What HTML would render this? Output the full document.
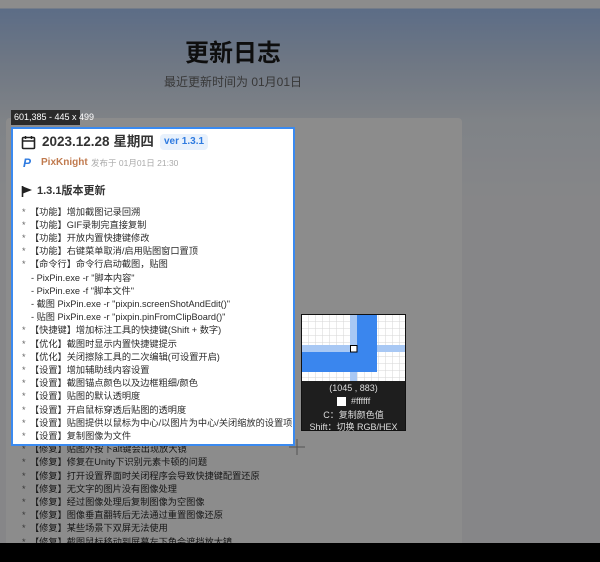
<!DOCTYPE html>
<html><head><meta charset="utf-8"><style>
*{margin:0;padding:0;box-sizing:border-box}
body{width:600px;height:562px;overflow:hidden;position:relative;font-family:"Liberation Sans","Noto Sans CJK SC",sans-serif;background:#fff}
.bg{position:absolute;left:0;top:0;width:600px;height:562px;background:linear-gradient(180deg,#fff 0,#fff 8px,#a8c6f5 9px,#c8d8f0 60px,#e8eef6 120px,#f4f5f8 200px)}
.card{position:absolute;left:6px;top:118px;width:456px;height:440px;background:#fff;border-radius:4px}
h1{position:absolute;left:0;width:466px;text-align:center;top:36px;font-size:24px;line-height:30px;font-weight:bold;color:#1a1a1a;font-family:"Noto Sans CJK SC",sans-serif}
.sub{position:absolute;left:0;width:466px;text-align:center;top:75px;font-size:12px;line-height:14px;color:#666}
.dim{position:absolute;background:rgba(0,0,0,0.45)}
.t{position:absolute;white-space:nowrap;color:#333}
.li{position:absolute;left:22px;font-size:9.2px;color:#2a2a2a;white-space:nowrap;line-height:13px}
.li b{font-weight:normal;display:inline-block;width:8px;color:#666}
</style></head><body>
<div class="bg"></div>
<h1>更新日志</h1>
<div class="sub">最近更新时间为 01月01日</div>
<div class="card"></div>

<svg style="position:absolute;left:21px;top:135px" width="15" height="15" viewBox="0 0 15 15"><rect x="1.5" y="2.5" width="12" height="11" rx="1" fill="none" stroke="#222" stroke-width="1.6"/><line x1="1.5" y1="6" x2="13.5" y2="6" stroke="#222" stroke-width="1.5"/><line x1="4.5" y1="1" x2="4.5" y2="4" stroke="#222" stroke-width="1.5"/><line x1="10.5" y1="1" x2="10.5" y2="4" stroke="#222" stroke-width="1.5"/></svg>
<div class="t" style="left:42px;top:134px;font-size:13.5px;line-height:16px;font-weight:bold;color:#333">2023.12.28 星期四</div>
<div class="t" style="left:160px;top:134px;height:16px;padding:0 4px;line-height:16px;font-size:10px;font-weight:bold;color:#2f7be0;background:#e8f1fc;border-radius:4px">ver 1.3.1</div>
<div class="t" style="left:23px;top:156px;font-size:12px;line-height:14px;font-weight:bold;color:#2f7be0;font-style:italic">P</div>
<div class="t" style="left:41px;top:157px;font-size:10px;line-height:12px;font-weight:bold;color:#c07a4e">PixKnight</div>
<div class="t" style="left:91px;top:158px;font-size:8.5px;line-height:11px;color:#aaa">发布于 01月01日 21:30</div>
<svg style="position:absolute;left:21px;top:185px" width="12" height="12" viewBox="0 0 12 12"><line x1="1.5" y1="1" x2="1.5" y2="12" stroke="#222" stroke-width="1.6"/><path d="M2 1.5 L11 5 L2 8.5Z" fill="#222"/></svg>
<div class="t" style="left:37px;top:185px;font-size:11px;line-height:13px;font-weight:bold;color:#333">1.3.1版本更新</div>

<div class="li" style="top:205.5px"><b>*</b>【功能】增加截图记录回溯</div>
<div class="li" style="top:218.7px"><b>*</b>【功能】GIF录制完直接复制</div>
<div class="li" style="top:231.9px"><b>*</b>【功能】开放内置快捷键修改</div>
<div class="li" style="top:245.1px"><b>*</b>【功能】右键菜单取消/启用贴图窗口置顶</div>
<div class="li" style="top:258.3px"><b>*</b>【命令行】命令行启动截图，贴图</div>
<div class="li" style="top:271.5px;left:31px">- PixPin.exe -r "脚本内容"</div>
<div class="li" style="top:284.7px;left:31px">- PixPin.exe -f "脚本文件"</div>
<div class="li" style="top:297.9px;left:31px">- 截图 PixPin.exe -r "pixpin.screenShotAndEdit()"</div>
<div class="li" style="top:311.1px;left:31px">- 贴图 PixPin.exe -r "pixpin.pinFromClipBoard()"</div>
<div class="li" style="top:324.3px"><b>*</b>【快捷键】增加标注工具的快捷键(Shift + 数字)</div>
<div class="li" style="top:337.5px"><b>*</b>【优化】截图时显示内置快捷键提示</div>
<div class="li" style="top:350.7px"><b>*</b>【优化】关闭擦除工具的二次编辑(可设置开启)</div>
<div class="li" style="top:363.9px"><b>*</b>【设置】增加辅助线内容设置</div>
<div class="li" style="top:377.1px"><b>*</b>【设置】截图锚点颜色以及边框粗细/颜色</div>
<div class="li" style="top:390.3px"><b>*</b>【设置】贴图的默认透明度</div>
<div class="li" style="top:403.5px"><b>*</b>【设置】开启鼠标穿透后贴图的透明度</div>
<div class="li" style="top:416.7px"><b>*</b>【设置】贴图提供以鼠标为中心/以图片为中心/关闭缩放的设置项</div>
<div class="li" style="top:429.9px"><b>*</b>【设置】复制图像为文件</div>
<div class="li" style="top:443.1px"><b>*</b>【修复】贴图外按下alt键会出现放大镜</div>
<div class="li" style="top:456.3px"><b>*</b>【修复】修复在Unity下识别元素卡顿的问题</div>
<div class="li" style="top:469.5px"><b>*</b>【修复】打开设置界面时关闭程序会导致快捷键配置还原</div>
<div class="li" style="top:482.7px"><b>*</b>【修复】无文字的图片没有图像处理</div>
<div class="li" style="top:495.9px"><b>*</b>【修复】经过图像处理后复制图像为空图像</div>
<div class="li" style="top:509.1px"><b>*</b>【修复】图像垂直翻转后无法通过重置图像还原</div>
<div class="li" style="top:522.3px"><b>*</b>【修复】某些场景下双屏无法使用</div>
<div class="li" style="top:535.5px"><b>*</b>【修复】截图鼠标移动到屏幕左下角会遮挡放大镜</div>

<div class="dim" style="left:0;top:0;width:600px;height:127px"></div>
<div class="dim" style="left:0;top:127px;width:11px;height:319px"></div>
<div class="dim" style="left:295px;top:127px;width:305px;height:319px"></div>
<div class="dim" style="left:0;top:446px;width:600px;height:116px"></div>
<div style="position:absolute;left:0;top:543px;width:600px;height:19px;background:#000"></div>

<div style="position:absolute;left:11px;top:127px;width:284px;height:319px;border:2px solid #3a8af0"></div>
<div class="t" style="left:11px;top:110px;width:69px;height:15px;background:#2a2a2a;color:#fff;font-size:9px;line-height:15px;padding-left:3px">601,385 - 445 x 499</div>

<div style="position:absolute;left:301px;top:314px;width:105px;height:117px;background:#1e1e1e;border:1px solid #111"></div>
<svg style="position:absolute;left:302px;top:315px" width="103" height="66" viewBox="0 0 103 66">
<defs><pattern id="g" width="7" height="7" patternUnits="userSpaceOnUse"><rect width="7" height="7" fill="#fff"/><path d="M7 0V7H0" fill="none" stroke="#d6d6d6" stroke-width="1"/></pattern></defs>
<rect width="103" height="66" fill="url(#g)"/>
<rect x="48" y="0" width="7" height="66" fill="#a8c8f4"/>
<rect x="0" y="30" width="103" height="7" fill="#a8c8f4"/>
<rect x="55" y="0" width="20" height="57" fill="#3a86ee"/>
<rect x="0" y="37" width="75" height="20" fill="#3a86ee"/>
<rect x="48.5" y="30.5" width="6.5" height="6.5" fill="#fff" stroke="#000" stroke-width="1"/>
</svg>
<div class="t" style="left:301px;top:383px;width:105px;text-align:center;color:#ddd;font-size:9px">(1045 , 883)</div>
<div style="position:absolute;left:337px;top:397px;width:9px;height:9px;background:#fff"></div>
<div class="t" style="left:351px;top:396px;color:#ddd;font-size:9px">#ffffff</div>
<div class="t" style="left:301px;top:408px;width:105px;text-align:center;color:#ddd;font-size:9px">C：复制颜色值</div>
<div class="t" style="left:301px;top:420px;width:105px;text-align:center;color:#ddd;font-size:9px">Shift：切换 RGB/HEX</div>
<svg style="position:absolute;left:289px;top:439px" width="16" height="16"><path d="M8 0V16M0 8H16" stroke="#555" stroke-width="1"/></svg>
</body></html>
